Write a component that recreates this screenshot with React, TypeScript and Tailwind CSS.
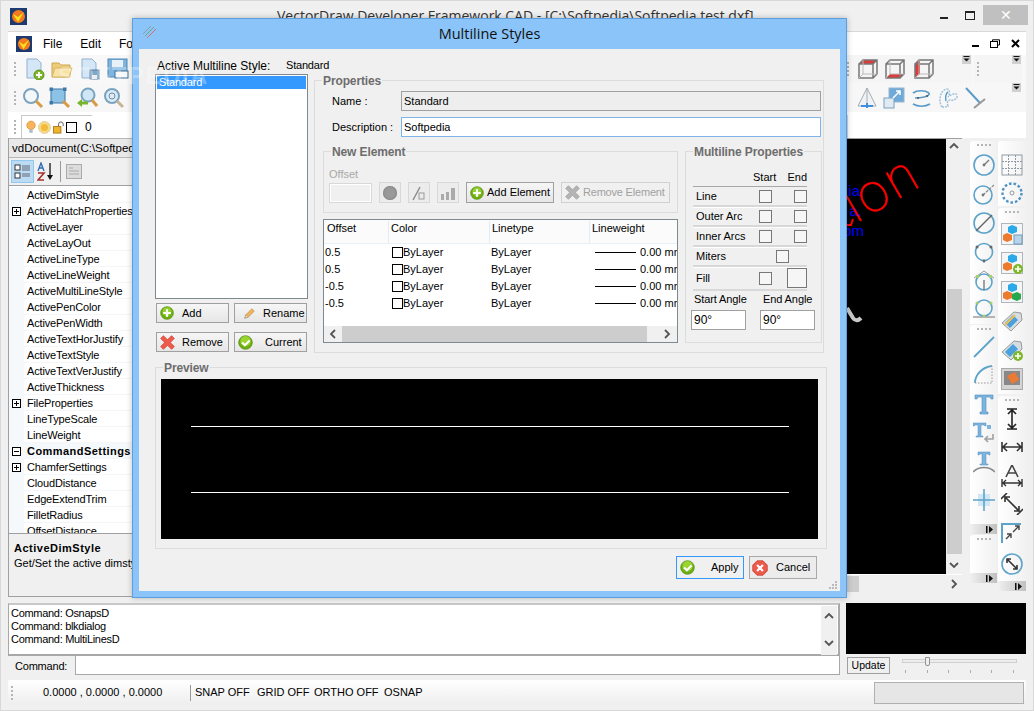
import type { ReactNode } from "react"

// small helpers for the Win32-looking controls
type IconProps = { s?: number; gray?: boolean }

function Svg({ s = 22, children }: { s?: number; children: ReactNode }) {
  return (
    <svg width={s} height={s} viewBox="0 0 22 22" fill="none" className="block shrink-0">
      {children}
    </svg>
  )
}

const GreenPlus = ({ s = 15, gray }: IconProps) => (
  <Svg s={s}>
    <circle cx="11" cy="11" r="10" fill={gray ? "#aaa" : "#6fae12"} stroke={gray ? "#999" : "#4d8a0c"} />
    <circle cx="11" cy="9" r="7" fill={gray ? "#bbb" : "#93cf2e"} />
    <path d="M11 5v12M5 11h12" stroke="#fff" strokeWidth="3.4" />
  </Svg>
)
const GreenCheck = ({ s = 15 }: IconProps) => (
  <Svg s={s}>
    <circle cx="11" cy="11" r="10" fill="#6fae12" stroke="#4d8a0c" />
    <circle cx="11" cy="9" r="7.5" fill="#9ad432" />
    <path d="M6 11l4 4 7-7" stroke="#fff" strokeWidth="3" />
  </Svg>
)
const RedCross = ({ s = 15, gray }: IconProps) => (
  <Svg s={s}>
    <path d="M1 5l4-4 6 6 6-6 4 4-6 6 6 6-4 4-6-6-6 6-4-4 6-6z" fill={gray ? "#b4b4b4" : "#ef5a4a"} stroke={gray ? "#999" : "#c9372a"} />
  </Svg>
)
const RedStop = ({ s = 16 }: IconProps) => (
  <Svg s={s}>
    <path d="M7 1h8l6 6v8l-6 6H7l-6-6V7z" fill="#ec5a4c" stroke="#c9372a" />
    <path d="M7 7l8 8M15 7l-8 8" stroke="#fff" strokeWidth="3" />
  </Svg>
)
const Pencil = ({ s = 15 }: IconProps) => (
  <Svg s={s}>
    <path d="M3 19l2-6L15 3l4 4L9 17z" fill="#f2b35e" stroke="#b9803a" />
    <path d="M3 19l2-6 4 4z" fill="#f6e3c4" stroke="#9c8a70" />
  </Svg>
)

const DocNew = () => (
  <Svg>
    <path d="M4 1h10l4 4v15H4z" fill="#d5e7f6" stroke="#8fb3d0" />
    <circle cx="16" cy="17" r="5" fill="#7cb82a" stroke="#5c9219" />
    <path d="M16 14v6M13 17h6" stroke="#fff" strokeWidth="1.8" />
  </Svg>
)
const Folder = () => (
  <Svg>
    <path d="M1 5h7l2 2h9v12H1z" fill="#eccb7a" stroke="#cda850" />
    <path d="M1 19l3-9h17l-3 9z" fill="#f8e2a6" stroke="#d7b665" />
  </Svg>
)
const DocSave = () => (
  <Svg>
    <path d="M3 1h10l4 4v15H3z" fill="#d5e7f6" stroke="#8fb3d0" />
    <rect x="11" y="12" width="9" height="9" fill="#7fa7c7" stroke="#56789a" />
    <rect x="13" y="17" width="5" height="4" fill="#e8eef4" />
  </Svg>
)
const Floppy = () => (
  <Svg>
    <rect x="1" y="1" width="19" height="18" fill="#7fb5df" stroke="#4f87b5" />
    <rect x="5" y="2" width="11" height="7" fill="#e8f1f8" />
    <rect x="8" y="13" width="13" height="7" fill="#f6f8fa" stroke="#3d6e99" />
  </Svg>
)
const Magnifier = ({ fill = "#f4f7fa" }: { fill?: string }) => (
  <Svg>
    <circle cx="9" cy="9" r="7" fill={fill} stroke="#7aa3bf" strokeWidth="2" />
    <path d="M14 14l6 6" stroke="#d99a45" strokeWidth="3" />
  </Svg>
)
const ZoomExtents = () => (
  <Svg>
    <rect x="2" y="2" width="14" height="14" fill="#8cc2e6" stroke="#3f77a5" />
    <rect x="0.5" y="0.5" width="3.5" height="3.5" fill="#3f77a5" />
    <rect x="14" y="0.5" width="3.5" height="3.5" fill="#3f77a5" />
    <rect x="0.5" y="14" width="3.5" height="3.5" fill="#3f77a5" />
    <path d="M14 14l6 6" stroke="#d99a45" strokeWidth="3" />
  </Svg>
)
const ZoomPrev = () => (
  <Svg>
    <circle cx="12" cy="8" r="6.5" fill="#cfe6f6" stroke="#7aa3bf" strokeWidth="2" />
    <path d="M16 13l5 6" stroke="#d99a45" strokeWidth="3" />
    <path d="M1 16l5-4v2.5h6v3H6V20z" fill="#77b52c" />
  </Svg>
)
const ZoomIn = () => (
  <Svg>
    <circle cx="9" cy="9" r="7" fill="#dcebf6" stroke="#7aa3bf" strokeWidth="2" />
    <circle cx="9" cy="9" r="3" stroke="#6d8ca3" />
    <path d="M14 14l6 6" stroke="#c7b59a" strokeWidth="3" />
  </Svg>
)
const Bulb = () => (
  <svg width="10" height="14" viewBox="0 0 12 16" className="block">
    <circle cx="6" cy="6" r="5" fill="#f9b35a" stroke="#e09030" />
    <rect x="4" y="11" width="4" height="4" fill="#a9bfd0" />
  </svg>
)
const Sun = () => (
  <svg width="13" height="13" viewBox="0 0 14 14" className="block">
    <circle cx="7" cy="7" r="6.5" fill="#f5d98a" stroke="#d9c38c" strokeDasharray="2 1" />
    <circle cx="7" cy="7" r="3.8" fill="#f3bb3a" />
  </svg>
)
const Lock = () => (
  <svg width="13" height="13" viewBox="0 0 14 13" className="block" fill="none">
    <rect x="0.5" y="5.5" width="8" height="7" fill="#f0b32e" stroke="#b07b16" />
    <path d="M6 5V3a2.5 2.5 0 0 1 5 0v2" stroke="#555" />
  </svg>
)
const Cube = ({ face }: { face: "top" | "bottom" | "left" }) => (
  <Svg>
    {face === "top" && <path d="M6 2h14l-4 4H2z" fill="#dd3b3b" />}
    {face === "bottom" && <path d="M2 20h14l4-4H6z" fill="#dd3b3b" />}
    {face === "left" && <path d="M2 6l5-4v14l-5 4z" fill="#dd3b3b" />}
    <path d="M2 6h14v14H2zM2 6l4-4h14v14l-4 4M16 6l4-4" stroke="#777" strokeWidth="1.5" />
    <path d="M6 2v14h14M6 16l-4 4" stroke="#bbb" />
  </Svg>
)
const Prism = () => (
  <Svg>
    <path d="M11 1L2 19h18z" fill="#eef2f5" stroke="#a6adb3" />
    <path d="M11 1v18" stroke="#a6adb3" />
    <path d="M5 19h12M11 16v5" stroke="#3f8fe0" strokeWidth="2" />
  </Svg>
)
const Scale = () => (
  <Svg>
    <rect x="6" y="1" width="15" height="14" fill="#6eaad8" stroke="#9bb6cc" />
    <rect x="1" y="11" width="10" height="10" fill="#dfeaf3" stroke="#7aa0bd" />
    <path d="M10 11l7-7M13 4h4v4" stroke="#fff" strokeWidth="1.5" />
  </Svg>
)
const Spline = () => (
  <Svg>
    <path d="M3 6c4-3 12-3 16 0M19 6c2 4-10 5-14 5M3 17c5 3 12 3 17 0" stroke="#5b9bc8" strokeWidth="1.6" />
    <circle cx="8" cy="11" r="1" fill="#555" />
    <circle cx="17" cy="9" r="1" fill="#555" />
  </Svg>
)
const Cloud = () => (
  <Svg>
    <path d="M5 20C1 14 3 3 10 2c3 0 3 5 1 8 2-2 8-5 9-2 1 4-4 6-7 5-3 0-3 3-2 6-2 1-4 1-6 1z" stroke="#9fc3dc" strokeWidth="1.5" strokeDasharray="2 1" />
    <path d="M9 14c-1-4 0-8 2-9" stroke="#5b9bc8" strokeWidth="1.4" />
  </Svg>
)
const LineTee = () => (
  <Svg>
    <path d="M2 1l14 15" stroke="#5b9bc8" strokeWidth="2" />
    <path d="M10 21l11-9" stroke="#999" strokeWidth="2" />
  </Svg>
)

// right hand drawing tools
const CircleBase = ({ children }: { children?: ReactNode }) => (
  <Svg>
    <circle cx="11" cy="11" r="10" stroke="#5ea3c9" strokeWidth="1.6" />
    {children}
  </Svg>
)
const CircleR = () => (
  <CircleBase>
    <path d="M11 11l5-5" stroke="#777" strokeWidth="1.2" />
    <circle cx="11" cy="11" r="1.4" fill="#777" />
  </CircleBase>
)
const CircleROut = () => (
  <Svg>
    <circle cx="10" cy="12" r="9" stroke="#5ea3c9" strokeWidth="1.6" />
    <path d="M10 12l11-10" stroke="#888" strokeWidth="1.2" strokeDasharray="3 1" />
    <circle cx="10" cy="12" r="1.4" fill="#777" />
  </Svg>
)
const CircleD = () => (
  <CircleBase>
    <path d="M3 19L19 3" stroke="#666" strokeWidth="1.5" />
  </CircleBase>
)
const Circle3 = () => (
  <Svg>
    <circle cx="11" cy="11" r="8.5" stroke="#5ea3c9" strokeWidth="1.6" />
    <circle cx="4" cy="6" r="1.5" fill="#666" />
    <circle cx="18" cy="6" r="1.5" fill="#666" />
    <circle cx="11" cy="20" r="1.5" fill="#666" />
  </Svg>
)
const CircleTan = () => (
  <Svg>
    <circle cx="11" cy="12" r="8" stroke="#5ea3c9" strokeWidth="1.6" />
    <path d="M1 8l10-7 10 7" stroke="#999" />
    <rect x="3" y="5" width="3" height="3" fill="#a5d06a" />
    <rect x="16" y="5" width="3" height="3" fill="#a5d06a" />
    <path d="M11 20V10" stroke="#666" strokeWidth="1.2" />
  </Svg>
)
const CircleTan2 = () => (
  <Svg>
    <circle cx="11" cy="9" r="8" stroke="#5ea3c9" strokeWidth="1.6" />
    <path d="M0 18h22" stroke="#999" strokeWidth="1.4" />
    <circle cx="4" cy="4" r="1.5" fill="#a5d06a" />
    <circle cx="18" cy="4" r="1.5" fill="#a5d06a" />
    <circle cx="11" cy="17" r="1.5" fill="#a5d06a" />
  </Svg>
)
const LineTool = () => (
  <Svg>
    <path d="M1 21L21 1" stroke="#5ea3c9" strokeWidth="1.8" />
  </Svg>
)
const ArcTool = () => (
  <Svg>
    <path d="M2 19C2 10 10 3 19 2" stroke="#5ea3c9" strokeWidth="1.8" />
    <path d="M2 19h17V2" stroke="#999" strokeDasharray="1.5 1.5" />
  </Svg>
)
const TextT = () => (
  <Svg>
    <path d="M2 2h18v4h-2l-1-2h-4v15h2v2H7v-2h2V4H5L4 6H2z" fill="#7db4dd" stroke="#4d8fc0" strokeWidth=".6" />
  </Svg>
)
const TextN = () => (
  <Svg>
    <path d="M0 1h13v3h-1l-1-1H8v11h2v1H3v-1h2V3H2L1 4H0z" fill="#7db4dd" stroke="#4d8fc0" strokeWidth=".5" />
    <path d="M14 3h4v4h-4z" fill="#7db4dd" />
    <path d="M20 12v5h-8m3-3l-3 3 3 3" stroke="#a0a0a0" strokeWidth="1.6" />
  </Svg>
)
const TextArc = () => (
  <Svg>
    <path d="M5 1h12v3h-1l-1-1h-2v10h2v1H7v-1h2V3H7L6 4H5z" fill="#7db4dd" stroke="#4d8fc0" strokeWidth=".5" />
    <path d="M0 21c6-6 16-6 22 0" stroke="#888" strokeWidth="1.5" />
  </Svg>
)
const Cross = () => (
  <Svg>
    <rect x="5" y="5" width="12" height="12" fill="#cfe6f4" />
    <path d="M11 0v22M0 11h22" stroke="#5ea3c9" strokeWidth="1.6" />
  </Svg>
)
const Grid3 = () => (
  <Svg>
    <rect x="1" y="1" width="20" height="20" stroke="#8f9aa3" />
    <path d="M7.5 1v20M14.5 1v20M1 7.5h20M1 14.5h20" stroke="#8f9aa3" strokeDasharray="2 1" />
  </Svg>
)
const DotCircle = () => (
  <Svg>
    <circle cx="11" cy="11" r="9.5" stroke="#4f93c4" strokeWidth="2.4" strokeDasharray="2.6 2" />
    <circle cx="11" cy="11" r="2" stroke="#999" />
  </Svg>
)
const Blocks = ({ badge }: { badge?: "save" | "plus" | "green" }) => (
  <Svg>
    <rect x="0.5" y="0.5" width="21" height="21" fill="#f3f5f6" stroke="#b0b5b8" />
    <path d="M11 2l5 2v5l-5 2-4-2V4z" fill="#2aa9e8" />
    <path d="M6 10l5 2v5l-5 2-4-2v-5z" fill="#ee7a2e" />
    {badge === "green" && <path d="M16 11l4 2v5l-4 2-5-2v-5z" fill="#27a84a" />}
    {badge === "plus" && (
      <>
        <circle cx="17" cy="17" r="5" fill="#7cb82a" />
        <path d="M17 14v6M14 17h6" stroke="#fff" strokeWidth="1.6" />
      </>
    )}
    {badge === "save" && <rect x="13" y="12" width="8" height="9" fill="#b9d4e8" stroke="#6f9cc0" />}
  </Svg>
)
const Tag = ({ plus }: { plus?: boolean }) => (
  <Svg>
    <path d="M1 13L13 2l7 1 1 7-11 11z" fill="#d6dde2" stroke="#999" />
    <path d="M4 13l8-8 5 5-8 8z" fill="#4aa0dc" />
    {plus ? (
      <>
        <circle cx="17" cy="17" r="5" fill="#7cb82a" />
        <path d="M17 14v6M14 17h6" stroke="#fff" strokeWidth="1.6" />
      </>
    ) : (
      <path d="M4 15l10-10" stroke="#f2c04e" strokeWidth="2" />
    )}
  </Svg>
)
const Picture = () => (
  <Svg>
    <rect x="0.5" y="0.5" width="21" height="21" fill="#d4d4d4" stroke="#aaa" />
    <rect x="3" y="3" width="16" height="14" fill="#888" />
    <path d="M6 8l8-4 4 8-7 4z" fill="#ea7a34" />
  </Svg>
)
const DimV = () => (
  <Svg>
    <path d="M11 2v18M6 1h10M6 21h10M7 6l4-4 4 4M7 16l4 4 4-4" stroke="#222" strokeWidth="1.6" />
  </Svg>
)
const DimH = () => (
  <Svg>
    <path d="M2 11h18M1 6v10M21 6v10M6 7l-4 4 4 4M16 7l4 4-4 4" stroke="#333" strokeWidth="1.6" />
  </Svg>
)
const DimA = () => (
  <Svg>
    <path d="M5 12L11 0l6 12M7 8h8" stroke="#444" strokeWidth="1.6" />
    <path d="M2 18h18M1 14v8M21 14v8M5 15l-3 3 3 3M17 15l3 3-3 3" stroke="#333" strokeWidth="1.4" />
  </Svg>
)
const DimD = () => (
  <Svg>
    <path d="M3 3l16 16M0 6l6-6M16 22l6-6M4 9V4h5M18 13v5h-5" stroke="#333" strokeWidth="1.6" />
  </Svg>
)
const DimBox = () => (
  <Svg>
    <path d="M1 21V2h19" stroke="#5ea3c9" strokeWidth="2" />
    <path d="M5 17l5-5M6 12h4v4M12 10l6-6M14 4h4v4" stroke="#444" strokeWidth="1.4" />
  </Svg>
)
const DimCircle = () => (
  <CircleBase>
    <path d="M6 6l10 10M6 10V6h4M16 12v4h-4" stroke="#333" strokeWidth="1.6" />
  </CircleBase>
)

const Grip = ({ vertical = true }: { vertical?: boolean }) => (
  <div className={`shrink-0 ${vertical ? "flex flex-col gap-[2px] w-[3px]" : "flex gap-[2px] h-[3px]"}`}>
    {[0, 1, 2, 3].map((i) => (
      <span key={i} className="block size-[2px] bg-[#b5b5b5]" />
    ))}
  </div>
)

const Overflow = () => (
  <div className="flex w-[11px] flex-col items-center justify-end self-stretch pb-[1px]">
    <svg width="9" height="9" viewBox="0 0 9 9" className="block">
      <rect width="9" height="9" fill="#d0d0d0" />
      <path d="M1.5 1.5h6" stroke="#111" />
      <path d="M1.5 3.5h6l-3 3z" fill="#111" />
    </svg>
  </div>
)

const Chevron = ({ dir }: { dir: "up" | "down" | "left" | "right" }) => {
  const d = { up: "M1 6l4-4 4 4", down: "M1 2l4 4 4-4", left: "M6 1L2 5l4 4", right: "M3 1l4 4-4 4" }[dir]
  return (
    <svg width="10" height="10" viewBox="0 0 10 10" fill="none" className="block shrink-0">
      <path d={d} stroke="#555" strokeWidth="1.8" />
    </svg>
  )
}

const ExpandBox = ({ minus }: { minus?: boolean }) => (
  <span className="relative block size-[9px] border border-black bg-white">
    <span className="absolute left-[1px] top-[3px] h-px w-[5px] bg-black" />
    {!minus && <span className="absolute left-[3px] top-[1px] h-[5px] w-px bg-black" />}
  </span>
)

const PROPS: { name: string; plus?: boolean; minus?: boolean; bold?: boolean }[] = [
  { name: "ActiveDimStyle" },
  { name: "ActiveHatchProperties", plus: true },
  { name: "ActiveLayer" },
  { name: "ActiveLayOut" },
  { name: "ActiveLineType" },
  { name: "ActiveLineWeight" },
  { name: "ActiveMultiLineStyle" },
  { name: "ActivePenColor" },
  { name: "ActivePenWidth" },
  { name: "ActiveTextHorJustify" },
  { name: "ActiveTextStyle" },
  { name: "ActiveTextVerJustify" },
  { name: "ActiveThickness" },
  { name: "FileProperties", plus: true },
  { name: "LineTypeScale" },
  { name: "LineWeight" },
  { name: "CommandSettings", minus: true, bold: true },
  { name: "ChamferSettings", plus: true },
  { name: "CloudDistance" },
  { name: "EdgeExtendTrim" },
  { name: "FilletRadius" },
  { name: "OffsetDistance" },
]

function PropertyPanel() {
  return (
    <div className="flex w-[125px] shrink-0 flex-col overflow-hidden border-l border-[#a0a0a0]">
      <div className="flex h-[20px] items-center whitespace-nowrap border border-l-0 border-[#b8b8b8] bg-[#e9e9e9] pl-[3px] pt-[2px] text-[11.5px]">
        vdDocument(C:\Softpedia
      </div>
      <div className="flex h-[27px] items-center gap-[3px] pl-[2px]">
        <span className="flex size-[23px] items-center justify-center border border-[#90c8f0] bg-[#bcdcf4]">
          <svg width="17" height="15" viewBox="0 0 17 15" fill="none" className="block">
            <rect x="1" y="1" width="5" height="5" fill="#fff" stroke="#333" />
            <rect x="1" y="9" width="5" height="5" fill="#fff" stroke="#333" />
            <path d="M8 2h8M8 4h8M8 6h8M8 10h8M8 12h8" stroke="#667" />
          </svg>
        </span>
        <svg width="18" height="19" viewBox="0 0 18 19" fill="none" className="block">
          <path d="M1 9l3-8 3 8M2 6h4" stroke="#2d6fb8" strokeWidth="1.4" />
          <path d="M1 11h6L1 18h6" stroke="#a33030" strokeWidth="1.6" />
          <path d="M13 1v15" stroke="#111" strokeWidth="1.3" />
          <path d="M10 13h6l-3 5z" fill="#111" />
        </svg>
        <span className="ml-[2px] mr-[2px] h-[21px] w-px bg-[#999]" />
        <svg width="16" height="15" viewBox="0 0 16 15" fill="none" className="block">
          <rect x="0.5" y="0.5" width="15" height="14" fill="#dcdcdc" stroke="#aaa" />
          <path d="M3 4h4M3 7h10M3 10h10" stroke="#aaa" />
        </svg>
      </div>
      <div className="h-[349px] overflow-hidden border-y border-[#a0a0a0] bg-white pt-[1px]">
        {PROPS.map((p) => (
          <div key={p.name} className="flex h-4 bg-white">
            <div className="flex w-[15px] shrink-0 items-center justify-center bg-[#f6f9fc]">
              {p.plus && <ExpandBox />}
              {p.minus && <ExpandBox minus />}
            </div>
            <div
              className={`flex flex-1 items-center whitespace-nowrap border-b border-[#f4f6f9] pl-[3px] pt-[2px] ${
                p.bold ? "bg-[#f6f9fc] font-bold tracking-[0.45px]" : "tracking-[-0.15px]"
              }`}
            >
              {p.name}
            </div>
          </div>
        ))}
      </div>
      <div className="flex-1 overflow-hidden whitespace-nowrap border-b border-[#a0a0a0] bg-[#f0f0f0] pl-[5px] pt-[7px]">
        <div className="font-bold leading-[14px] tracking-[0.5px]">ActiveDimStyle</div>
        <div className="mt-[1px] leading-[14px]">Get/Set the active dimsty</div>
      </div>
    </div>
  )
}

function Canvas() {
  return (
    <div className="flex w-[829px] shrink-0 flex-col">
      <div className="flex min-h-0 flex-1 border-t border-[#a0a0a0]">
        <div className="relative flex-1 overflow-hidden bg-black">
          {/* drawing entities, they sit on the model space */}
          <span className="absolute right-[86px] top-[42px] text-[15px] leading-[20px] text-[#0000ff]">ia</span>
          <span className="absolute right-[84px] top-[62px] text-[15px] leading-[20px] text-[#0000ff]">a.</span>
          <span className="absolute right-[82px] top-[82px] text-[15px] leading-[20px] text-[#0000ff]">om</span>
          <span className="absolute left-[714px] top-[42px] origin-left -rotate-[30deg] whitespace-nowrap font-['Roboto','Liberation_Sans',sans-serif] text-[54px] font-thin leading-none tracking-[3px] text-[#ff0000] [-webkit-text-stroke:0.7px_#ff0000]">
            ion
          </span>
          <svg width="10" height="10" viewBox="0 0 10 10" fill="none" className="absolute left-[713px] top-[78px]">
            <path d="M0 8h5l2-6" stroke="#ff0000" strokeWidth="2" />
          </svg>
          <svg width="20" height="20" viewBox="0 0 20 20" fill="none" className="absolute left-[713px] top-[168px]">
            <path d="M1 1l6 10c2 3 5 3 8 0" stroke="#c8c8c8" strokeWidth="4" />
          </svg>
        </div>
        <div className="flex w-[16px] shrink-0 flex-col items-center justify-between bg-[#f0f0f0] py-[3px]">
          <Chevron dir="up" />
          <div className="mb-[7px] mt-[137px] w-[15px] flex-1 bg-[#cdcdcd]" />
          <Chevron dir="down" />
        </div>
      </div>
      <div className="flex h-[18px] shrink-0 items-center border-t border-white bg-[#f0f0f0]">
        <div className="flex-1" />
        <div className="mr-[90px] h-[16px] w-[13px] bg-[#cdcdcd]" />
        <div className="mr-[3px]">
          <Chevron dir="right" />
        </div>
      </div>
      <div className="h-[5px] shrink-0" />
    </div>
  )
}

function ToolGroup({ grip = true, overflow, children }: { grip?: boolean; overflow?: boolean; children?: ReactNode }) {
  return (
    <div className="flex flex-col rounded-t-[3px] bg-gradient-to-r from-white to-[#f1f1f1]">
      {grip && (
        <div className="flex h-[9px] items-center justify-center">
          <Grip vertical={false} />
        </div>
      )}
      <div className="flex flex-1 flex-col items-center">{children}</div>
      {overflow && (
        <div className="flex h-[10px] items-center justify-end bg-gradient-to-r from-[#f0f0f0] to-[#c0c0c0] pr-[2px]">
          <svg width="9" height="7" viewBox="0 0 9 7" className="block">
            <path d="M0 0h1.5v7H0zM3 0l4 3.5L3 7z" fill="#111" />
          </svg>
        </div>
      )}
    </div>
  )
}

const T = ({ className = "h-[29px]", children }: { className?: string; children: ReactNode }) => (
  <div className={`flex w-full items-center justify-center ${className}`}>{children}</div>
)

function RightTools() {
  return (
    <div className="ml-[8px] flex w-[56px] shrink-0 gap-[1px] pt-[3px]">
      <div className="flex w-[27px] flex-col gap-[1px]">
        <ToolGroup>
          <T><CircleR /></T>
          <T><CircleROut /></T>
          <T><CircleD /></T>
          <T><Circle3 /></T>
          <T><CircleTan /></T>
          <T><CircleTan2 /></T>
        </ToolGroup>
        <ToolGroup overflow>
          <T className="h-[26px]"><LineTool /></T>
          <T><ArcTool /></T>
          <T><TextT /></T>
          <T><TextN /></T>
          <T><TextArc /></T>
          <T className="h-[48px]"><Cross /></T>
        </ToolGroup>
        <ToolGroup overflow>
          <div className="h-[29px]" />
        </ToolGroup>
      </div>
      <div className="flex w-[28px] flex-col gap-[2px]">
        <ToolGroup grip={false}>
          <div className="h-[9px]" />
          <T><Grid3 /></T>
          <T className="h-[27px]"><DotCircle /></T>
        </ToolGroup>
        <ToolGroup>
          <div className="h-[2px]" />
          <T><Blocks badge="save" /></T>
          <T><Blocks badge="plus" /></T>
          <T><Blocks badge="green" /></T>
          <T><Tag /></T>
          <T><Tag plus /></T>
          <T className="h-[30px]"><Picture /></T>
        </ToolGroup>
        <ToolGroup overflow>
          <T className="h-[27px]"><DimV /></T>
          <T><DimH /></T>
          <T><DimA /></T>
          <T className="h-[28px]"><DimD /></T>
          <T><DimBox /></T>
          <T className="h-[34px]"><DimCircle /></T>
        </ToolGroup>
      </div>
    </div>
  )
}

function TopToolbars() {
  return (
    <div className="flex h-[83px] shrink-0 flex-col bg-white">
      <div className="flex h-[28px] items-center bg-[#f8f8f8]">
        <div className="ml-[6px] mr-[6px]"><Grip /></div>
        <div className="flex items-center gap-[6px]">
          <DocNew />
          <Folder />
          <DocSave />
          <Floppy />
        </div>
        <div className="ml-auto flex h-full w-[127px] items-center bg-[#f5f5f5] pl-[2px]">
          <Grip />
          <div className="ml-[7px] flex items-center gap-[5px]">
            <Cube face="top" />
            <Cube face="bottom" />
            <span className="ml-[2px]"><Cube face="left" /></span>
          </div>
          <div className="ml-auto h-full"><Overflow /></div>
        </div>
        <div className="ml-[2px] flex h-full w-[48px] items-center bg-[#f5f5f5] pl-[3px]">
          <Grip />
          <div className="ml-auto h-full"><Overflow /></div>
        </div>
        <div className="w-[4px]" />
      </div>
      <div className="flex h-[29px] items-center bg-[#f7f7f7]">
        <div className="ml-[6px] mr-[5px]"><Grip /></div>
        <div className="flex items-center gap-[5px]">
          <Magnifier fill="#f4f7fa" />
          <ZoomExtents />
          <ZoomPrev />
          <ZoomIn />
        </div>
        <div className="ml-auto flex h-full items-center gap-[5px]">
          <Prism />
          <Scale />
          <Spline />
          <Cloud />
          <LineTee />
          <div className="ml-[20px] h-full"><Overflow /></div>
        </div>
        <div className="w-[4px]" />
      </div>
      <div className="mt-[3px] flex h-[23px] items-center bg-white">
        <div className="ml-[6px] mr-[4px]"><Grip /></div>
        <div className="flex h-[23px] items-center gap-[2px] border-l border-t border-[#c8c8c8] pl-[4px]">
          <Bulb />
          <Sun />
          <Lock />
          <span className="-ml-[2px] block size-[11px] border border-black bg-white" />
          <span className="ml-[6px] text-[12px]">0</span>
        </div>
        <div className="ml-auto mr-[178px] flex h-full items-center">
          <div className="flex h-[21px] w-[14px] items-center justify-center border-r border-[#c0c0c0]">
            <Chevron dir="down" />
          </div>
          <span className="ml-[2px] h-full w-px bg-[#d8d8d8]" />
        </div>
      </div>
    </div>
  )
}

function CommandArea() {
  return (
    <div className="flex shrink-0 flex-col">
      <div className="mt-[6px] flex">
        <div className="flex h-[53px] w-[832px] border-2 border-l border-[#a8a8a8] border-t-[#c8c8c8] bg-white">
          <div className="flex-1 pl-[2px] pt-[2px] text-[11px] leading-[13px] tracking-[-0.3px]">
            <div>Command: OsnapsD</div>
            <div>Command: blkdialog</div>
            <div>Command: MultiLinesD</div>
          </div>
          <div className="mr-[1px] mt-[1px] flex h-[49px] w-[16px] flex-col items-center justify-between bg-[#f0f0f0] py-[6px]">
            <Chevron dir="up" />
            <Chevron dir="down" />
          </div>
        </div>
        <div className="ml-[6px] h-[51px] w-[180px] bg-black" />
      </div>
      <div className="flex h-[24px]">
        <div className="flex h-[19px] w-[67px] items-center pl-[7px] pt-[2px] text-[11px] tracking-[-0.2px]">Command:</div>
        <div className="h-[19px] w-[765px] border border-t-0 border-[#a8a8a8] bg-white" />
        <div className="ml-[7px] mt-[1px] flex h-[17px] w-[43px] items-center justify-center border border-[#a0a0a0] bg-[#f0f0f0] text-[10.5px]">
          Update
        </div>
        <div className="ml-[12px] w-[115px] pt-[3px]">
          <div className="relative h-[4px] border border-[#d0d0d0] bg-[#ececec]">
            <span className="absolute -top-[3px] left-[22px] h-[9px] w-[5px] rounded-b-[2px] border border-[#909090] bg-[#f0f0f0]" />
          </div>
          <div className="mt-[7px] flex justify-between px-[3px]">
            {[0, 1, 2, 3, 4, 5].map((i) => (
              <span key={i} className="block h-[3px] w-px bg-[#aaa]" />
            ))}
          </div>
        </div>
      </div>
      <div className="flex h-[25px] items-center whitespace-nowrap rounded-[2px] bg-gradient-to-b from-white to-[#eeeeee] text-[11px]">
        <div className="ml-[3px] mr-[29px]"><Grip /></div>
        <span className="w-[147px]">0.0000 , 0.0000 , 0.0000</span>
        <span className="mr-[4px] h-[16px] w-px bg-[#999]" />
        <span className="w-[62px]">SNAP OFF</span>
        <span className="w-[57px]">GRID OFF</span>
        <span className="w-[70px]">ORTHO OFF</span>
        <span>OSNAP</span>
        <div className="ml-auto mr-[2px] h-[22px] w-[150px] border border-[#b0b0b0] bg-[#e6e6e6]" />
      </div>
    </div>
  )
}

/* --- dialog --- */

function Group({ title, className, children }: { title: string; className: string; children: ReactNode }) {
  return (
    <div className={`relative border border-[#dcdcdc] ${className}`}>
      <span className="absolute -top-[7px] left-[7px] whitespace-nowrap bg-[#f0f0f0] px-[1px] text-[12px] font-bold leading-[14px] tracking-[-0.12px] text-[#6d6d6d]">
        {title}
      </span>
      {children}
    </div>
  )
}

function Btn({ icon, label, className = "", gray }: { icon: ReactNode; label: string; className?: string; gray?: boolean }) {
  return (
    <div
      className={`flex items-center border bg-gradient-to-b from-[#f6f6f6] to-[#e6e6e6] ${className} ${
        gray ? "border-[#d0d0d0] text-[#a0a0a0]" : "border-[#a0a0a0]"
      }`}
    >
      {icon}
      <span className="whitespace-nowrap text-[11px]">{label}</span>
    </div>
  )
}

const Check = ({ className = "" }: { className?: string }) => (
  <span className={`block size-[13px] shrink-0 border border-[#777] bg-[#f6f6f6] ${className}`} />
)

const DisabledTool = ({ children }: { children: ReactNode }) => (
  <div className="flex h-[21px] w-[22px] items-center justify-center border border-[#d8d8d8] bg-[#ececec]">{children}</div>
)

function OffsetTable() {
  const rows = ["0.5", "0.5", "-0.5", "-0.5"]
  return (
    <div className="mt-[6px] flex h-[124px] w-[355px] flex-col border border-[#7f8a90] bg-white text-[11px]">
      <div className="grid h-[24px] shrink-0 grid-cols-[65px_101px_100px_1fr] border-b border-[#e8f0f8] bg-[#fbfbfb] pt-[1px] leading-[14px]">
        <span className="border-r border-[#e3ecf5] pl-[3px]">Offset</span>
        <span className="border-r border-[#e3ecf5] pl-[2px]">Color</span>
        <span className="border-r border-[#e3ecf5] pl-[2px]">Linetype</span>
        <span className="pl-[2px]">Lineweight</span>
      </div>
      <div className="flex-1 overflow-hidden">
        {rows.map((r, i) => (
          <div key={i} className="grid h-[17px] grid-cols-[65px_101px_100px_1fr] items-center whitespace-nowrap">
            <span className="pl-[1px]">{r}</span>
            <span className="flex items-center pl-[3px]">
              <span className="block size-[11px] border border-black" />
              ByLayer
            </span>
            <span className="pl-[1px]">ByLayer</span>
            <span className="flex items-center overflow-hidden pl-[5px]">
              <span className="mr-[4px] block h-px w-[41px] shrink-0 bg-black" />
              0.00 mm
            </span>
          </div>
        ))}
      </div>
      <div className="flex h-[16px] shrink-0 items-center bg-[#f0f0f0] pl-[5px] pr-[5px]">
        <Chevron dir="left" />
        <div className="ml-[3px] h-full w-[305px] bg-[#cdcdcd]" />
        <div className="ml-auto"><Chevron dir="right" /></div>
      </div>
    </div>
  )
}

function MultilineProps() {
  const row = "flex h-[20px] items-center border-b-2 border-[#d8d8d8] pl-[3px] shadow-[0_1px_0_#fff]"
  return (
    <Group title="Multiline Properties" className="mt-[14px] h-[192px] w-[137px] pl-[7px] pt-[17px]">
      <div className="mr-[14px]">
        <div className="flex h-[18px] items-center border-b border-[#a8a8a8]">
          <span className="ml-[60px] w-[36px]">Start</span>
          <span>End</span>
        </div>
        {["Line", "Outer Arc", "Inner Arcs"].map((label) => (
          <div key={label} className={row}>
            <span className="w-[63px]">{label}</span>
            <Check />
            <Check className="ml-[22px]" />
          </div>
        ))}
        <div className={row}>
          <span className="w-[80px]">Miters</span>
          <Check />
        </div>
        <div className="flex h-[24px] items-center border-b-2 border-[#d8d8d8] pl-[3px]">
          <span className="w-[63px]">Fill</span>
          <Check />
          <span className="ml-[15px] block size-[20px] border border-[#777] bg-[#f6f6f6]" />
        </div>
      </div>
      <div className="mt-[3px] flex -ml-[2px] gap-[14px]">
        <div className="w-[55px]">
          <div className="h-[16px] whitespace-nowrap pl-[3px] tracking-[-0.1px]">Start Angle</div>
          <div className="flex h-[20px] items-center border border-[#a0a0a0] bg-white pl-[2px] text-[12px]">90°</div>
        </div>
        <div className="w-[55px]">
          <div className="h-[16px] whitespace-nowrap pl-[3px] tracking-[-0.1px]">End Angle</div>
          <div className="flex h-[20px] items-center border border-[#a0a0a0] bg-white pl-[2px] text-[12px]">90°</div>
        </div>
      </div>
    </Group>
  )
}

function Dialog() {
  return (
    <div className="absolute left-[131px] top-[17px] flex h-[580px] w-[715px] flex-col border border-[#5d9fdc] bg-[#8ac4f8] shadow-[0_0_6px_rgba(0,0,0,0.25)]">
      <div className="relative flex h-[30px] shrink-0 items-center justify-center">
        <svg width="16" height="16" viewBox="0 0 16 16" fill="none" className="absolute left-[9px] top-[6px]">
          <path d="M1 9l8-8" stroke="#8f9aa5" />
          <path d="M3 11l9-9" stroke="#5cae7a" />
          <path d="M5 13l9-9" stroke="#e06a6a" />
        </svg>
        <span className="font-['Open_Sans','Liberation_Sans',sans-serif] text-[14.5px] leading-none text-[#111]">Multiline Styles</span>
      </div>
      <div className="mx-[6px] mb-[6px] flex min-h-0 flex-1 flex-col bg-[#f0f0f0] px-[16px] pt-[9px] text-[11px]">
        <div className="flex h-[15px] items-center pl-[2px] leading-none">
          <span className="w-[129px] text-[12px]">Active Multiline Style:</span>
          <span className="tracking-[-0.2px]">Standard</span>
        </div>
        <div className="flex h-[279px] gap-[6px] pt-[1px]">
          <div className="flex w-[153px] shrink-0 flex-col">
            <div className="h-[225px] border border-[#7f8a90] bg-white p-[1px]">
              <div className="flex h-[13px] items-center bg-[#3399ff] pl-[2px] tracking-[-0.2px] text-white">Standard</div>
            </div>
            <div className="mt-[4px] grid grid-cols-2 gap-x-[5px] gap-y-[9px] pl-[1px] pr-[1px]">
              <Btn icon={<GreenPlus s={14} />} label="Add" className="h-[20px] gap-[8px] pl-[3px]" />
              <Btn icon={<Pencil s={13} />} label="Rename" className="h-[20px] gap-[7px] pl-[8px]" />
              <Btn icon={<RedCross s={15} />} label="Remove" className="h-[20px] gap-[7px] pl-[3px]" />
              <Btn icon={<GreenCheck />} label="Current" className="h-[20px] gap-[12px] pl-[3px]" />
            </div>
          </div>
          <Group title="Properties" className="mt-[6px] h-[273px] flex-1 pl-[8px]">
            <div className="mt-[10px] flex h-[20px] items-center">
              <span className="w-[78px] pl-[9px]">Name :</span>
              <div className="flex h-[20px] w-[420px] items-center border border-[#a0a0a0] bg-[#eeeeee] pl-[2px]">Standard</div>
            </div>
            <div className="mt-[6px] flex h-[20px] items-center">
              <span className="w-[78px] pl-[9px]">Description :</span>
              <div className="flex h-[20px] w-[420px] items-center border border-[#7eb4ea] bg-white pl-[2px]">Softpedia</div>
            </div>
            <div className="flex gap-[7px]">
              <div className="w-[355px]">
                <Group title="New Element" className="mt-[14px] h-[62px] w-[355px] px-[5px]">
                  <div className="pt-[15px] leading-[14px] text-[#a8a8a8]">Offset</div>
                  <div className="mt-[1px] flex items-center gap-[7px]">
                    <span className="block h-[20px] w-[43px] border border-[#d8d8d8] bg-[#f0f0f0] shadow-[inset_0_0_0_1px_#fff]" />
                    <DisabledTool>
                      <span className="block size-[14px] rounded-full bg-[#999] shadow-[inset_0_0_2px_#666]" />
                    </DisabledTool>
                    <DisabledTool>
                      <svg width="16" height="16" viewBox="0 0 16 16" fill="none" className="block">
                        <path d="M2 15L9 2" stroke="#888" strokeWidth="1.4" />
                        <rect x="8" y="8" width="5" height="6" stroke="#999" />
                      </svg>
                    </DisabledTool>
                    <DisabledTool>
                      <svg width="16" height="14" viewBox="0 0 16 14" className="block">
                        <path d="M1 8h3v6H1zM6 6h3v8H6zM11 2h4v12h-4z" fill="#aaa" />
                      </svg>
                    </DisabledTool>
                    <Btn icon={<GreenPlus s={14} />} label="Add Element" className="h-[21px] w-[88px] gap-[3px] pl-[3px]" />
                    <Btn icon={<RedCross s={15} gray />} label="Remove Element" className="h-[21px] w-[109px] gap-[3px] bg-none pl-[3px] tracking-[-0.2px]" gray />
                  </div>
                </Group>
                <OffsetTable />
              </div>
              <MultilineProps />
            </div>
          </Group>
        </div>
        <Group title="Preview" className="mt-[15px] h-[182px] w-[672px] px-[5px] pt-[11px]">
          <div className="flex h-[160px] w-[657px] flex-col items-center bg-black">
            <div className="mt-[47px] h-px w-[598px] bg-white" />
            <div className="mt-[65px] h-px w-[598px] bg-white" />
          </div>
        </Group>
        <div className="mr-[7px] mt-[7px] flex justify-end gap-[5px]">
          <div className="flex h-[23px] w-[68px] items-center border border-[#3399ff] bg-[#f0f0f0] pl-[3px]">
            <GreenCheck s={15} />
            <span className="ml-[16px]">Apply</span>
          </div>
          <div className="flex h-[23px] w-[68px] items-center border border-[#a8a8a8] bg-[#ececec] pl-[2px]">
            <RedStop />
            <span className="ml-[8px]">Cancel</span>
          </div>
        </div>
        <div className="relative flex-1">
          <svg width="8" height="8" viewBox="0 0 8 8" className="absolute bottom-[2px] -right-[13px]">
            <path d="M6 0h2v2H6zM3 3h2v2H3zM6 3h2v2H6zM0 6h2v2H0zM3 6h2v2H3zM6 6h2v2H6z" fill="#bbb" />
          </svg>
        </div>
      </div>
    </div>
  )
}

export default function App() {
  return (
    <div className="relative h-[711px] w-[1034px] overflow-hidden border border-[#d8d8d8] bg-[#f0f0f0] font-['Liberation_Sans',Arial,sans-serif] text-[11px] leading-none text-black">
      {/* app title bar */}
      <div className="flex h-[30px] items-center pl-[9px]">
        <svg width="17" height="17" viewBox="0 0 17 17" className="block">
          <rect width="17" height="17" fill="#1c3a6e" />
          <circle cx="8.5" cy="8.5" r="6.5" fill="#f47a20" />
          <path d="M3 6l5 8 6-10-6 5z" fill="#f6e21c" />
        </svg>
        <span className="ml-[250px] whitespace-nowrap font-['Open_Sans','Liberation_Sans',sans-serif] text-[14px] text-[#333]">
          VectorDraw Developer Framework CAD - [C:\Softpedia\Softpedia test.dxf]
        </span>
        <div className="ml-auto flex h-[21px] items-center pb-[2px]">
          <span className="mr-[17px] mt-[5px] block h-[2px] w-[8px] bg-[#222]" />
          <span className="mr-[8px] block h-[9px] w-[10px] border border-t-2 border-[#222]" />
          <span className="mr-[5px] flex h-[20px] w-[45px] items-center justify-center bg-[#c0c0c0] text-[14px] text-white">✕</span>
        </div>
      </div>

      {/* mdi frame */}
      <div className="mx-[7px] flex h-[674px] w-[1018px] flex-col bg-[#f0f0f0]">
        <div className="flex h-[24px] shrink-0 items-center border-t border-[#d8d8d8] bg-white pl-[8px] text-[12px]">
          <svg width="16" height="16" viewBox="0 0 17 17" className="block">
            <rect width="17" height="17" fill="#1c3a6e" />
            <circle cx="8.5" cy="8.5" r="6.5" fill="#f47a20" />
            <path d="M3 6l5 8 6-10-6 5z" fill="#f6e21c" />
          </svg>
          <span className="ml-[11px]">File</span>
          <span className="ml-[18px]">Edit</span>
          <span className="ml-[18px]">Fo</span>
          <div className="ml-auto mr-[6px] flex items-center gap-[11px]">
            <span className="mt-[5px] block h-[2px] w-[7px] bg-black" />
            <svg width="10" height="9" viewBox="0 0 10 9" fill="none" className="block">
              <path d="M2.5 2V.8h7V6H8" stroke="#000" />
              <rect x=".5" y="2.5" width="7" height="6" stroke="#000" />
            </svg>
            <svg width="9" height="9" viewBox="0 0 9 9" fill="none" className="block">
              <path d="M1 1l7 7M8 1L1 8" stroke="#000" strokeWidth="2" />
            </svg>
          </div>
        </div>
        <TopToolbars />
        <div className="flex h-[459px] shrink-0">
          <PropertyPanel />
          <Canvas />
          <RightTools />
        </div>
        <CommandArea />
      </div>

      <Dialog />
      <span className="absolute left-[57px] top-[63px] text-[24px] font-bold tracking-[1.5px] text-white/30">SOFTPEDIA</span>
    </div>
  )
}
